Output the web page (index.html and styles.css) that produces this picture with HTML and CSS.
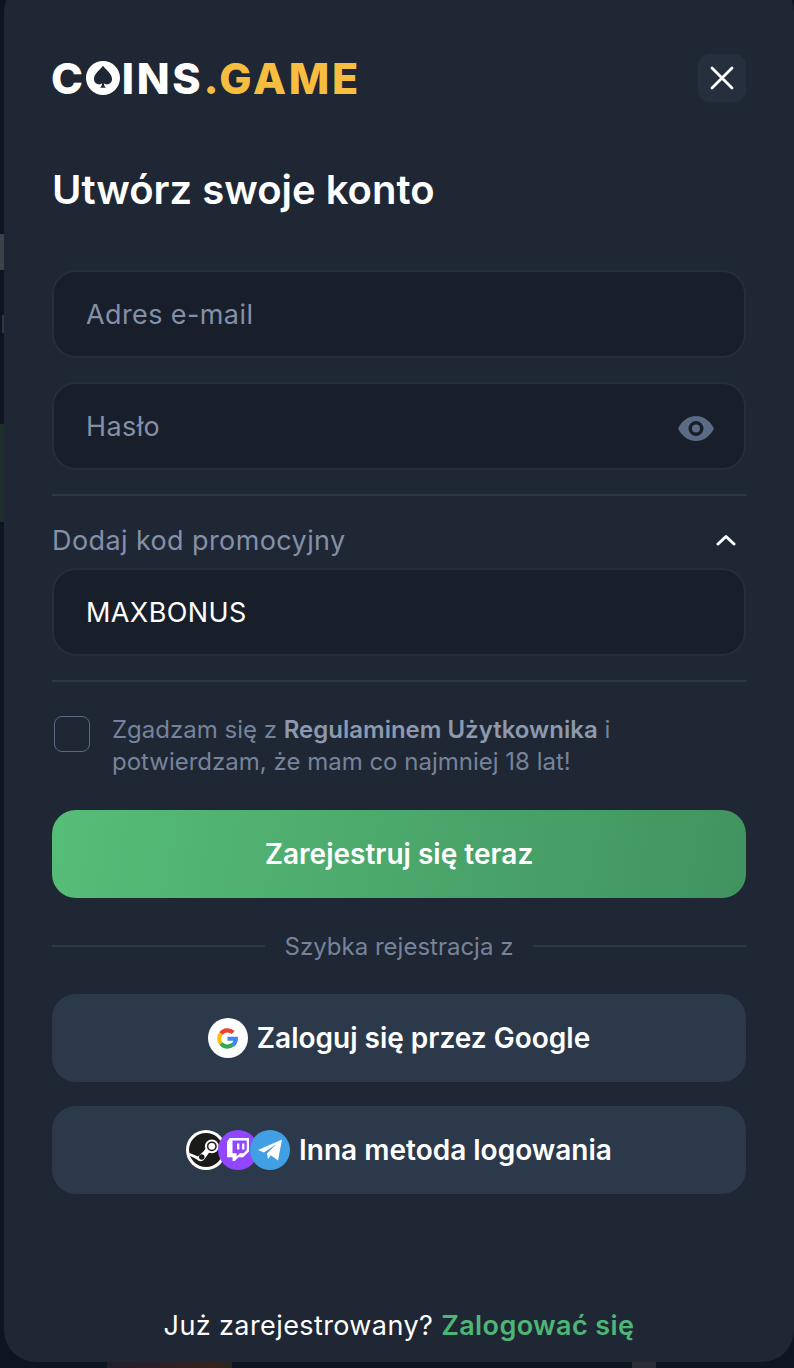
FILE: index.html
```html
<!DOCTYPE html>
<html>
	<head>
		<title>Coins.game</title>
		<link rel="stylesheet" href="styles.css">
	</head>
	<body>
		<div class="backdrop">
			<span class="bg-green"></span>
			<span class="bg-glyph"></span>
			<span class="bg-tick"></span>
			<span class="bg-photo"></span>
			<span class="bg-photo-right"></span>
		</div>
		<div class="modal">
			<div class="top">
				<div class="logo">
					<span>C</span>
					<svg class="logo-o" viewBox="0 0 32 32" width="34" height="34">
						<path fill="#fff" fill-rule="evenodd" d="M16 0a16 16 0 1 1 0 32a16 16 0 0 1 0-32zM16 4.500C13.500 8 7.500 12 7.500 17c0 3.200 2.400 5 4.800 5c1.200 0 2.200-.4 2.900-1.100c-.2 2-.9 3.200-2 4.300h5.600c-1.100-1.100-1.800-2.300-2-4.300c.7.7 1.700 1.100 2.900 1.100c2.400 0 4.800-1.800 4.800-5c0-5-6-9-8.500-12.500z"/>
					</svg>
					<span>INS</span><span class="logo-game">.GAME</span>
				</div>
				<button class="close">
					<svg viewBox="0 0 24 24" width="24" height="24">
						<path d="M2 2L22 22M22 2L2 22" stroke="#fff" stroke-width="2.800" stroke-linecap="round"/>
					</svg>
				</button>
			</div>

			<h1 class="title">Utwórz swoje konto</h1>

			<div class="field"><span class="placeholder">Adres e-mail</span></div>
			<div class="field">
				<span class="placeholder">Hasło</span>
				<svg class="eye" viewBox="0 0 36 25" width="36" height="25">
					<path fill="#5b6b86" fill-rule="evenodd" d="M18 0C26 0 32.500 5.500 36 12.500C32.500 19.500 26 25 18 25C10 25 3.500 19.500 0 12.500C3.500 5.500 10 0 18 0zM18 5a7.500 7.500 0 1 0 0 15a7.500 7.500 0 0 0 0-15zM18 8.500a4 4 0 1 1 0 8a4 4 0 0 1 0-8z"/>
				</svg>
			</div>

			<div class="divider"></div>

			<div class="promo-head">
				<span>Dodaj kod promocyjny</span>
				<svg viewBox="0 0 20 12" width="20" height="12">
					<path d="M2 10L10 2.500L18 10" fill="none" stroke="#fff" stroke-width="3" stroke-linecap="round" stroke-linejoin="round"/>
				</svg>
			</div>
			<div class="field field-promo"><span class="value">MAXBONUS</span></div>

			<div class="divider divider-low"></div>

			<div class="agree">
				<span class="checkbox"></span>
				<p>Zgadzam się z <b>Regulaminem Użytkownika</b> i potwierdzam, że mam co najmniej 18 lat!</p>
			</div>

			<button class="btn btn-green">Zarejestruj się teraz</button>

			<div class="quick"><span>Szybka rejestracja z</span></div>

			<button class="btn btn-dark">
				<span class="circle circle-white">
					<svg viewBox="0 0 48 48" width="21" height="21">
						<path fill="none" stroke="#EA4335" stroke-width="9.500" d="M37 10.500A19 19 0 0 0 9 12.500"/>
						<path fill="none" stroke="#FBBC05" stroke-width="9.500" d="M9 12.500A19 19 0 0 0 9 35.500"/>
						<path fill="none" stroke="#34A853" stroke-width="9.500" d="M9 35.500A19 19 0 0 0 36 38"/>
						<path fill="#4285F4" d="M47.500 20H24v9h13c-.6 3-2.500 5.500-5 7.200l7.700 6C44.500 38 48 31.500 48 24.500c0-1.600-.2-3-.5-4.500z"/>
					</svg>
				</span>
				<span>Zaloguj się przez Google</span>
			</button>

			<button class="btn btn-dark">
				<span class="icons">
					<span class="circle circle-steam">
						<svg viewBox="0 0 32 32" width="34" height="34">
							<circle cx="16" cy="16" r="16" fill="#1a1a18"/>
							<path fill="#fff" d="M0 18.500L8.500 22L14 17L16 14L20 17L15 24A4.500 4.500 0 0 1 7.500 25L0.800 21.500z"/>
							<circle cx="21.500" cy="12.500" r="6.500" fill="#fff"/>
							<circle cx="21.500" cy="12.500" r="4.600" fill="#1a1a18"/>
							<circle cx="21.500" cy="12.500" r="3.200" fill="#fff"/>
							<circle cx="12" cy="22.500" r="2.600" fill="#1a1a18"/>
						</svg>
					</span>
					<span class="circle circle-twitch">
						<svg viewBox="0 0 24 26" width="22" height="24">
							<path fill="#fff" fill-rule="evenodd" d="M3 0H24V14.500L17.500 21H12.500L8.500 25H6V21H0V4zM6 2.500V16.500H10.500V20L14 16.500H18L21.500 13V2.500zM11 6H13.500V12.500H11zM16.500 6H19V12.500H16.500z"/>
						</svg>
					</span>
					<span class="circle circle-telegram">
						<svg viewBox="0 0 24 22" width="24" height="22">
							<path fill="#fff" d="M0 11L24 0.500L20 21.500L12.800 16.300L10 20L9 14.500L18.500 5L6 13.500z"/>
						</svg>
					</span>
				</span>
				<span>Inna metoda logowania</span>
			</button>

			<div class="footer">Już zarejestrowany? <a class="login">Zalogować się</a></div>
		</div>
	</body>
</html>
```

FILE: styles.css
```css
* {
	box-sizing: border-box;
}

html, body {
	margin: 0;
	height: 1368px;
	overflow: hidden;
}

body {
	background: #0f1421;
	font-family: Inter, "Liberation Sans", sans-serif;
	position: relative;
}

.backdrop span {
	position: absolute;
	display: block;
}

.bg-green {
	left: 0;
	top: 424px;
	width: 4px;
	height: 98px;
	background: #1c2f2c;
}

.bg-glyph {
	left: 0;
	top: 234px;
	width: 4px;
	height: 36px;
	background: #3e4148;
}

.bg-tick {
	left: 2px;
	top: 315px;
	width: 2px;
	height: 18px;
	background: #33363f;
}

.bg-photo {
	left: 107px;
	top: 1362px;
	width: 125px;
	height: 6px;
	background: linear-gradient(90deg, #221f29, #2c1f27 40%, #33241f 85%, #26261f);
}

.bg-photo-right {
	left: 632px;
	top: 1362px;
	width: 24px;
	height: 6px;
	background: #2c2e36;
}

.modal {
	position: absolute;
	left: 4px;
	top: -20px;
	width: 790px;
	height: 1382px;
	padding: 74px 48px 0;
	background: #1f2734;
	border-radius: 32px;
	display: flex;
	flex-direction: column;
}

.top {
	display: flex;
	justify-content: space-between;
	align-items: center;
	height: 48px;
}

.logo {
	display: flex;
	align-items: center;
	margin-left: -1px;
	font-size: 43px;
	font-weight: 800;
	color: #fff;
	line-height: 48px;
	letter-spacing: 2.700px;
}

.logo-o {
	margin: 0 2px 0 0;
}

.logo-game {
	color: #f6bd40;
}

.close {
	width: 48px;
	height: 48px;
	padding: 0;
	border: 0;
	border-radius: 12px;
	background: #252f3e;
	display: flex;
	align-items: center;
	justify-content: center;
}

.title {
	margin: 64px 0 0;
	font-size: 40px;
	font-weight: 600;
	line-height: 48px;
	color: #fff;
}

.field {
	height: 88px;
	margin-top: 24px;
	padding: 0 32px;
	background: #181f2b;
	border: 2px solid #242e3c;
	border-radius: 24px;
	display: flex;
	align-items: center;
	justify-content: space-between;
	font-size: 27px;
	letter-spacing: 0.400px;
}

.title + .field {
	margin-top: 56px;
}

.placeholder {
	color: #8390a8;
}

.value {
	color: #fff;
}

.eye {
	margin: 4px -2px 0 0;
}

.field-promo {
	margin-top: 0;
}

.divider {
	height: 2px;
	margin-top: 24px;
	background: #2c3848;
}

.promo-head {
	height: 72px;
	padding: 16px 10px 0 0;
	display: flex;
	align-items: center;
	justify-content: space-between;
	font-size: 27px;
	letter-spacing: 0.400px;
	color: #8390a8;
}

.agree {
	display: flex;
	gap: 22px;
	margin-top: 34px;
	padding-left: 2px;
}

.checkbox {
	flex: none;
	width: 36px;
	height: 36px;
	border: 1px solid #5b6b86;
	border-radius: 8px;
}

.agree p {
	margin: -2px 0 0;
	font-size: 24px;
	line-height: 32px;
	color: #76839b;
}

.agree b {
	font-weight: 600;
	color: #8d99af;
}

.btn {
	height: 88px;
	width: 100%;
	padding: 0;
	border: 0;
	border-radius: 24px;
	font-family: inherit;
	font-size: 28px;
	font-weight: 600;
	color: #fff;
	display: flex;
	align-items: center;
	justify-content: center;
	flex: none;
}

.btn-green {
	margin-top: 32px;
	background: linear-gradient(100deg, #56bd78 0%, #41935f 100%);
}

.btn-dark {
	margin-bottom: 24px;
	gap: 9px;
	background: #2c394b;
}

.quick {
	height: 96px;
	display: flex;
	align-items: center;
	gap: 20px;
	font-size: 24px;
	color: #76839b;
}

.quick::before, .quick::after {
	content: "";
	flex: 1;
	height: 2px;
	background: #2c3848;
}

.circle {
	width: 40px;
	height: 40px;
	border-radius: 50%;
	display: flex;
	align-items: center;
	justify-content: center;
	flex: none;
}

.circle-white {
	background: #fff;
}

.icons {
	display: flex;
}

.circle-steam {
	background: #fff;
}

.circle-twitch {
	background: #9146ff;
	margin-left: -8px;
}

.circle-telegram {
	background: #419fe3;
	margin-left: -8px;
}

.footer {
	position: absolute;
	left: 0;
	right: 0;
	bottom: 18px;
	text-align: center;
	font-size: 27px;
	line-height: 36px;
	letter-spacing: 0.400px;
	color: #fff;
}

.login {
	font-weight: 600;
	color: #4db676;
}
```
